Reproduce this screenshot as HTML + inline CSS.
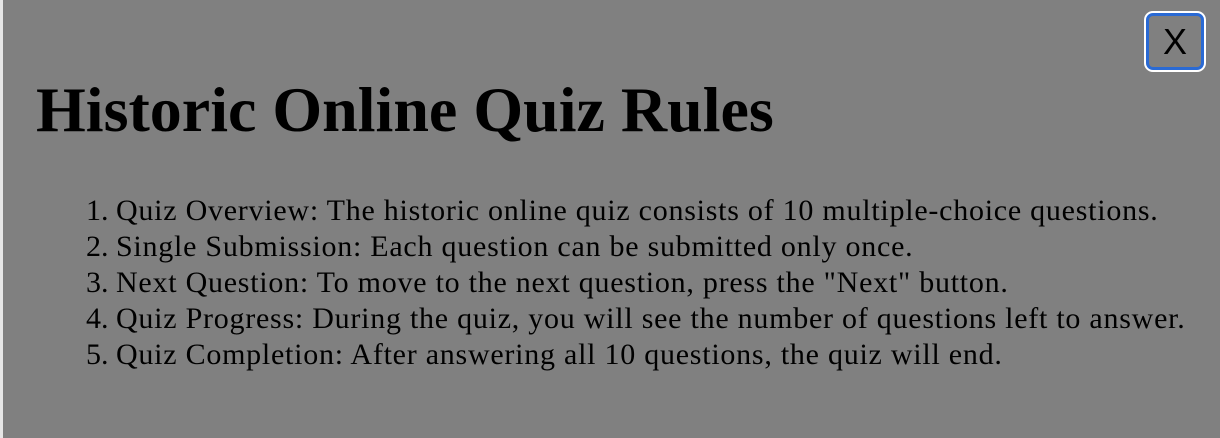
<!DOCTYPE html>
<html><head><style>
html,body{margin:0;padding:0;}
body{width:1220px;height:438px;background:#808080;position:relative;overflow:hidden;font-family:"Liberation Serif",serif;color:#000;}
.strip{position:absolute;left:0;top:0;width:3px;height:438px;background:#e6e6e6;}
h1{position:absolute;left:36px;top:72px;margin:0;font-size:64px;line-height:76px;font-weight:bold;white-space:nowrap;}
ol{position:absolute;left:84px;top:193px;margin:0;padding:0 0 0 32px;font-size:30px;line-height:36px;letter-spacing:0.75px;white-space:nowrap;}
li::marker{letter-spacing:0;}
.x{position:absolute;left:1146px;top:13px;width:52px;height:51px;border:3px solid #2a6ad4;border-radius:7px;box-shadow:0 0 0 2px #fff;background:#808080;font-family:"Liberation Sans",sans-serif;font-size:36px;line-height:51px;text-align:center;}
</style></head><body>
<div class="strip"></div>
<div class="x">X</div>
<h1>Historic Online Quiz Rules</h1>
<ol>
<li>Quiz Overview: The historic online quiz consists of 10 multiple-choice questions.</li>
<li>Single Submission: Each question can be submitted only once.</li>
<li>Next Question: To move to the next question, press the "Next" button.</li>
<li>Quiz Progress: During the quiz, you will see the number of questions left to answer.</li>
<li>Quiz Completion: After answering all 10 questions, the quiz will end.</li>
</ol>
</body></html>
